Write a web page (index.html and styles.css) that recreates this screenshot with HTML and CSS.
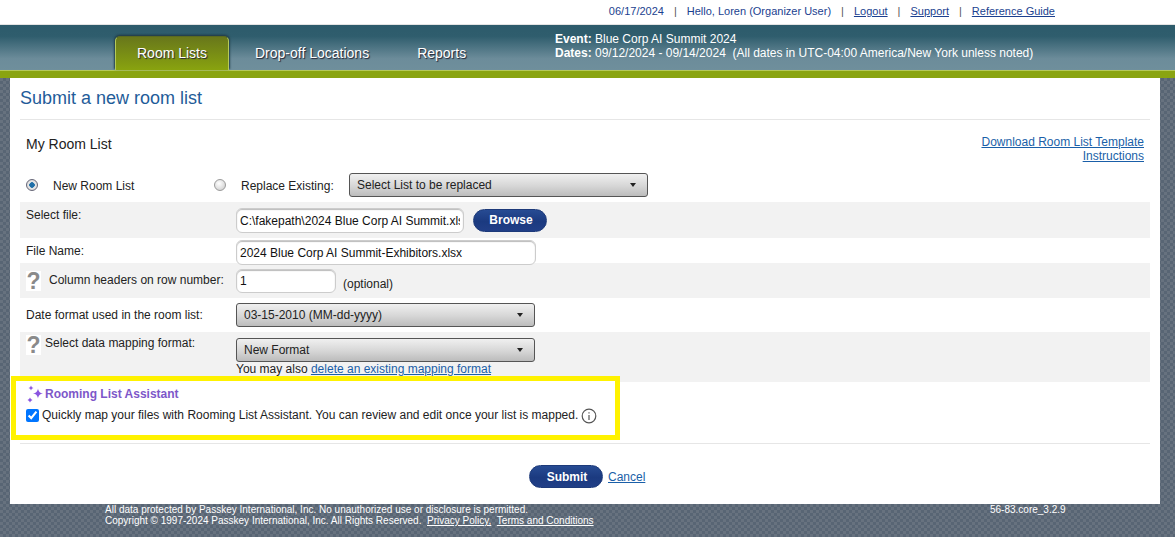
FILE: index.html
```html
<!DOCTYPE html>
<html lang="en">
<head>
<meta charset="utf-8">
<title>Submit a new room list</title>
<link rel="stylesheet" href="styles.css">
</head>
<body>
<div class="topbar">
  <span>06/17/2024</span><i>|</i>
  <span>Hello, Loren (Organizer User)</span><i>|</i>
  <a href="#">Logout</a><i>|</i>
  <a href="#">Support</a><i>|</i>
  <a href="#">Reference Guide</a>
</div>
<header class="header">
  <nav class="tabs">
    <a class="tab active" href="#">Room Lists</a>
    <a class="tab drop" href="#">Drop-off Locations</a>
    <a class="tab reports" href="#">Reports</a>
  </nav>
  <div class="event">
    <div><b>Event:</b> Blue Corp AI Summit 2024</div>
    <div><b>Dates:</b> 09/12/2024 - 09/14/2024 &nbsp;(All dates in UTC-04:00 America/New York unless noted)</div>
  </div>
</header>
<div class="greenbar"></div>
<main class="content">
  <h1 class="title">Submit a new room list</h1>
  <div class="listhead">
    <h2 class="subtitle">My Room List</h2>
    <div class="templates">
      <a href="#">Download Room List Template</a>
      <a href="#">Instructions</a>
    </div>
  </div>
  <div class="choice">
    <span class="radio checked"></span><span class="choice-new">New Room List</span>
    <span class="radio"></span><span class="choice-rep">Replace Existing:</span>
    <div class="select sel-list"><span>Select List to be replaced</span><em class="caret"></em></div>
  </div>
  <div class="row grey r-file">
    <label class="lab top">Select file:</label>
    <input class="field f-file" type="text" value="C:\fakepath\2024 Blue Corp AI Summit.xlsx">
    <button class="btn browse" type="button">Browse</button>
  </div>
  <div class="row r-name">
    <label class="lab top">File Name:</label>
    <input class="field f-name" type="text" value="2024 Blue Corp AI Summit-Exhibitors.xlsx">
  </div>
  <div class="row grey r-col">
    <label class="lab"><span class="help">?</span><span class="help-t1">Column headers on row number:</span></label>
    <input class="field f-num" type="text" value="1">
    <span class="opt">(optional)</span>
  </div>
  <div class="row r-date">
    <label class="lab">Date format used in the room list:</label>
    <div class="select sel-wide"><span>03-15-2010 (MM-dd-yyyy)</span><em class="caret"></em></div>
  </div>
  <div class="row grey r-map">
    <label class="lab top"><span class="help">?</span><span class="help-t2">Select data mapping format:</span></label>
    <div class="mapcol">
      <div class="select sel-wide"><span>New Format</span><em class="caret"></em></div>
      <div class="also">You may also <a href="#">delete an existing mapping format</a></div>
    </div>
  </div>
  <section class="assistant">
    <div class="as-title">
      <svg class="spark" width="18" height="18" viewBox="0 0 18 18" aria-hidden="true">
        <path d="M12 3.5 C12.7 6.8 13.7 7.8 17 8.5 C13.7 9.2 12.7 10.2 12 13.5 C11.3 10.2 10.3 9.2 7 8.5 C10.3 7.8 11.3 6.8 12 3.5Z"/>
        <path d="M5 0.5 L5.8 2.2 L7.5 3 L5.8 3.8 L5 5.5 L4.2 3.8 L2.5 3 L4.2 2.2Z"/>
        <path d="M4 12.5 L4.9 14.1 L6.5 15 L4.9 15.9 L4 17.5 L3.1 15.9 L1.5 15 L3.1 14.1Z"/>
      </svg>
      <span>Rooming List Assistant</span>
    </div>
    <div class="as-line">
      <input class="check" type="checkbox" checked>
      <span>Quickly map your files with Rooming List Assistant. You can review and edit once your list is mapped.</span>
      <svg class="info" width="16" height="16" viewBox="0 0 16 16" aria-hidden="true">
        <circle cx="8" cy="8" r="6.8"/>
        <path d="M8 7v5"/>
        <path d="M8 4.2v1.2"/>
      </svg>
    </div>
  </section>
  <div class="actions">
    <button class="btn submit" type="button">Submit</button>
    <a href="#">Cancel</a>
  </div>
</main>
<footer class="footer">
  <div class="legal">
    <div>All data protected by Passkey International, Inc. No unauthorized use or disclosure is permitted.</div>
    <div>Copyright © 1997-2024 Passkey International, Inc. All Rights Reserved. &nbsp;<a href="#">Privacy Policy,</a> &nbsp;<a href="#">Terms and Conditions</a></div>
  </div>
  <div class="version">56-83.core_3.2.9</div>
</footer>
</body>
</html>
```
FILE: styles.css
```css
* { box-sizing: border-box; }
html { background: #fff; }
html, body { margin: 0; padding: 0; }
body {
  height: 537px;
  overflow: hidden;
  font-family: "Liberation Sans", Arial, sans-serif;
  font-size: 12px;
  color: #222;
  background-color: #5f6c7a;
  background-image: repeating-conic-gradient(#586574 0 25%, #67727f 0 50%);
  background-size: 6px 6px;
}
a { color: #1a5fa8; }

.topbar {
  height: 25px;
  background: #fff;
  border-bottom: 1px solid #e4e4e4;
  display: flex;
  justify-content: flex-end;
  align-items: center;
  padding: 0 120px 3px 0;
  font-size: 11px;
  color: #1b3f8f;
}
.topbar a { color: #1b3f8f; }
.topbar i { font-style: normal; margin: 0 10px; color: #555; }

.header {
  height: 46px;
  background: linear-gradient(#2d5b6b 0, #2f5d6d 25%, #6c8c9a 75%, #6f8f9c 100%);
  border-bottom: 1px solid #b5c95a;
  display: flex;
  padding-left: 115px;
}
.tabs { display: flex; align-items: flex-end; width: 440px; }
.tab {
  color: #fff;
  text-decoration: none;
  font-size: 14px;
  height: 34px;
  line-height: 34px;
  text-shadow: 1px 1px 1px #223;
}
.tab.active {
  width: 114px;
  text-align: center;
  line-height: 33px;
  background: linear-gradient(#68771b, #89a30f);
  border: 1px solid #b5c95a;
  border-bottom: 0;
  border-top-color: #5a6a20;
  border-radius: 5px 5px 0 0;
  box-shadow: -1px -1px 2px #24404c, 1px -1px 2px #24404c;
  height: 34px;
}
.tab.drop { margin-left: 26px; }
.tab.reports { margin-left: 48px; }
.event {
  color: #fff;
  font-size: 12px;
  line-height: 14px;
  padding-top: 7px;
}
.greenbar { height: 7px; background: #8aa411; }

.content {
  width: 1150px;
  height: 426px;
  margin-left: 10px;
  background: #fff;
  padding: 0 10px;
  position: relative;
}
.title {
  margin: 0;
  height: 42px;
  padding-top: 9px;
  border-bottom: 1px solid #e6e6e6;
  font-size: 18px;
  line-height: 22px;
  font-weight: normal;
  color: #1f5c99;
}
.listhead {
  display: flex;
  justify-content: space-between;
  padding: 15px 6px 0;
  height: 50px;
}
.subtitle {
  margin: 0;
  font-size: 14px;
  line-height: 18px;
  font-weight: normal;
  color: #222;
}
.templates {
  display: flex;
  flex-direction: column;
  align-items: flex-end;
  line-height: 14px;
}
.choice {
  display: flex;
  align-items: center;
  height: 32px;
  padding-left: 6px;
}
.radio {
  width: 12px;
  height: 12px;
  border-radius: 50%;
  border: 1px solid #9a9a9a;
  background: radial-gradient(circle at 40% 35%, #fff, #c8c8c8);
  margin-top: -3px;
}
.radio.checked {
  background: radial-gradient(circle, #1f6fa8 0 2.5px, #e8e8e8 3px, #cfcfcf 100%);
  border-color: #667;
}
.choice-new { margin-left: 15px; width: 161px; }
.choice-rep { margin-left: 15px; width: 108px; }
.select {
  display: flex;
  justify-content: space-between;
  align-items: center;
  height: 24px;
  padding: 0 11px 0 7px;
  border: 1px solid #555;
  border-radius: 3px;
  background: linear-gradient(#f0f0f0, #d6d6d6 55%, #bcbcbc);
  color: #222;
}
.sel-list { width: 299px; margin-top: -2px; }
.sel-wide { width: 299px; }
.caret {
  width: 0;
  height: 0;
  border-left: 3px solid transparent;
  border-right: 3px solid transparent;
  border-top: 4px solid #222;
}
.row {
  display: flex;
  align-items: center;
}
.grey { background: #f2f2f2; }
.lab {
  width: 216px;
  padding-left: 6px;
  flex: none;
  display: flex;
  align-items: center;
  color: #222;
}
.lab.top { align-self: flex-start; }
.r-file { height: 36px; }
.r-file .lab { padding-top: 6px; }
.f-file { margin-top: 1px; }
.r-name { height: 25px; align-items: flex-start; }
.r-name .lab { padding-top: 6px; }
.f-name { margin-top: 2px; height: 23px; padding-bottom: 2px; }
.r-col { height: 35px; }
.r-date { height: 34px; }
.r-map { height: 50px; align-items: flex-start; }
.r-map .lab { padding-top: 3px; }
.field {
  font: 12px "Liberation Sans", Arial, sans-serif;
  color: #111;
  height: 25px;
  padding: 0 3px;
  border: 1px solid #ccc;
  border-radius: 6px;
  background: #fff;
  box-shadow: inset 0 1px 1px #bbb;
  outline: none;
}
.f-file { width: 228px; }
.f-name { width: 300px; }
.f-num { width: 100px; height: 24px; }
.opt { margin-left: 7px; padding-top: 6px; }
.btn {
  font: bold 12px "Liberation Sans", Arial, sans-serif;
  color: #fff;
  width: 74px;
  height: 23px;
  padding: 0 0 0 2px;
  border: 1px solid #1d3a7a;
  border-radius: 12px;
  background: linear-gradient(#274b93, #1b3a80 55%, #213f87);
}
.browse { margin-left: 9px; }
.help {
  flex: none;
  width: 15px;
  height: 20px;
  background: #fff;
  color: #8a8a8a;
  font: bold 23px/21px "Liberation Sans", sans-serif;
  text-align: center;
}
.help-t1 { margin-left: 8px; white-space: nowrap; margin-top: -2px; }
.help-t2 { margin-left: 4px; white-space: nowrap; margin-top: -4px; }
.mapcol { padding-top: 6px; }
.also { line-height: 14px; }
.assistant {
  position: absolute;
  left: 1px;
  top: 298px;
  width: 609px;
  height: 64px;
  border: 5px solid #fff200;
  background: #fff;
  padding: 4px 0 0 10px;
}
.as-title {
  display: flex;
  align-items: center;
  gap: 1px;
  font-weight: bold;
  color: #7d57c9;
}
.spark { fill: #8a55e0; }
.as-line {
  display: flex;
  align-items: center;
  margin-top: 2px;
  color: #222;
}
.check {
  width: 13px;
  height: 13px;
  margin: 1px 3px 0 0;
}
.info { margin-left: 3px; fill: none; stroke: #555; stroke-width: 1.2; margin-top: 3px; }
.actions {
  position: absolute;
  left: 10px;
  right: 10px;
  top: 365px;
  padding: 21px 0 0 509px;
  border-top: 1px solid #e6e6e6;
  display: flex;
  align-items: center;
  gap: 5px;
}
.footer {
  display: flex;
  padding-left: 105px;
  color: #fff;
  font-size: 10px;
  line-height: 11px;
}
.footer a { color: #fff; }
.legal { width: 885px; }
```
